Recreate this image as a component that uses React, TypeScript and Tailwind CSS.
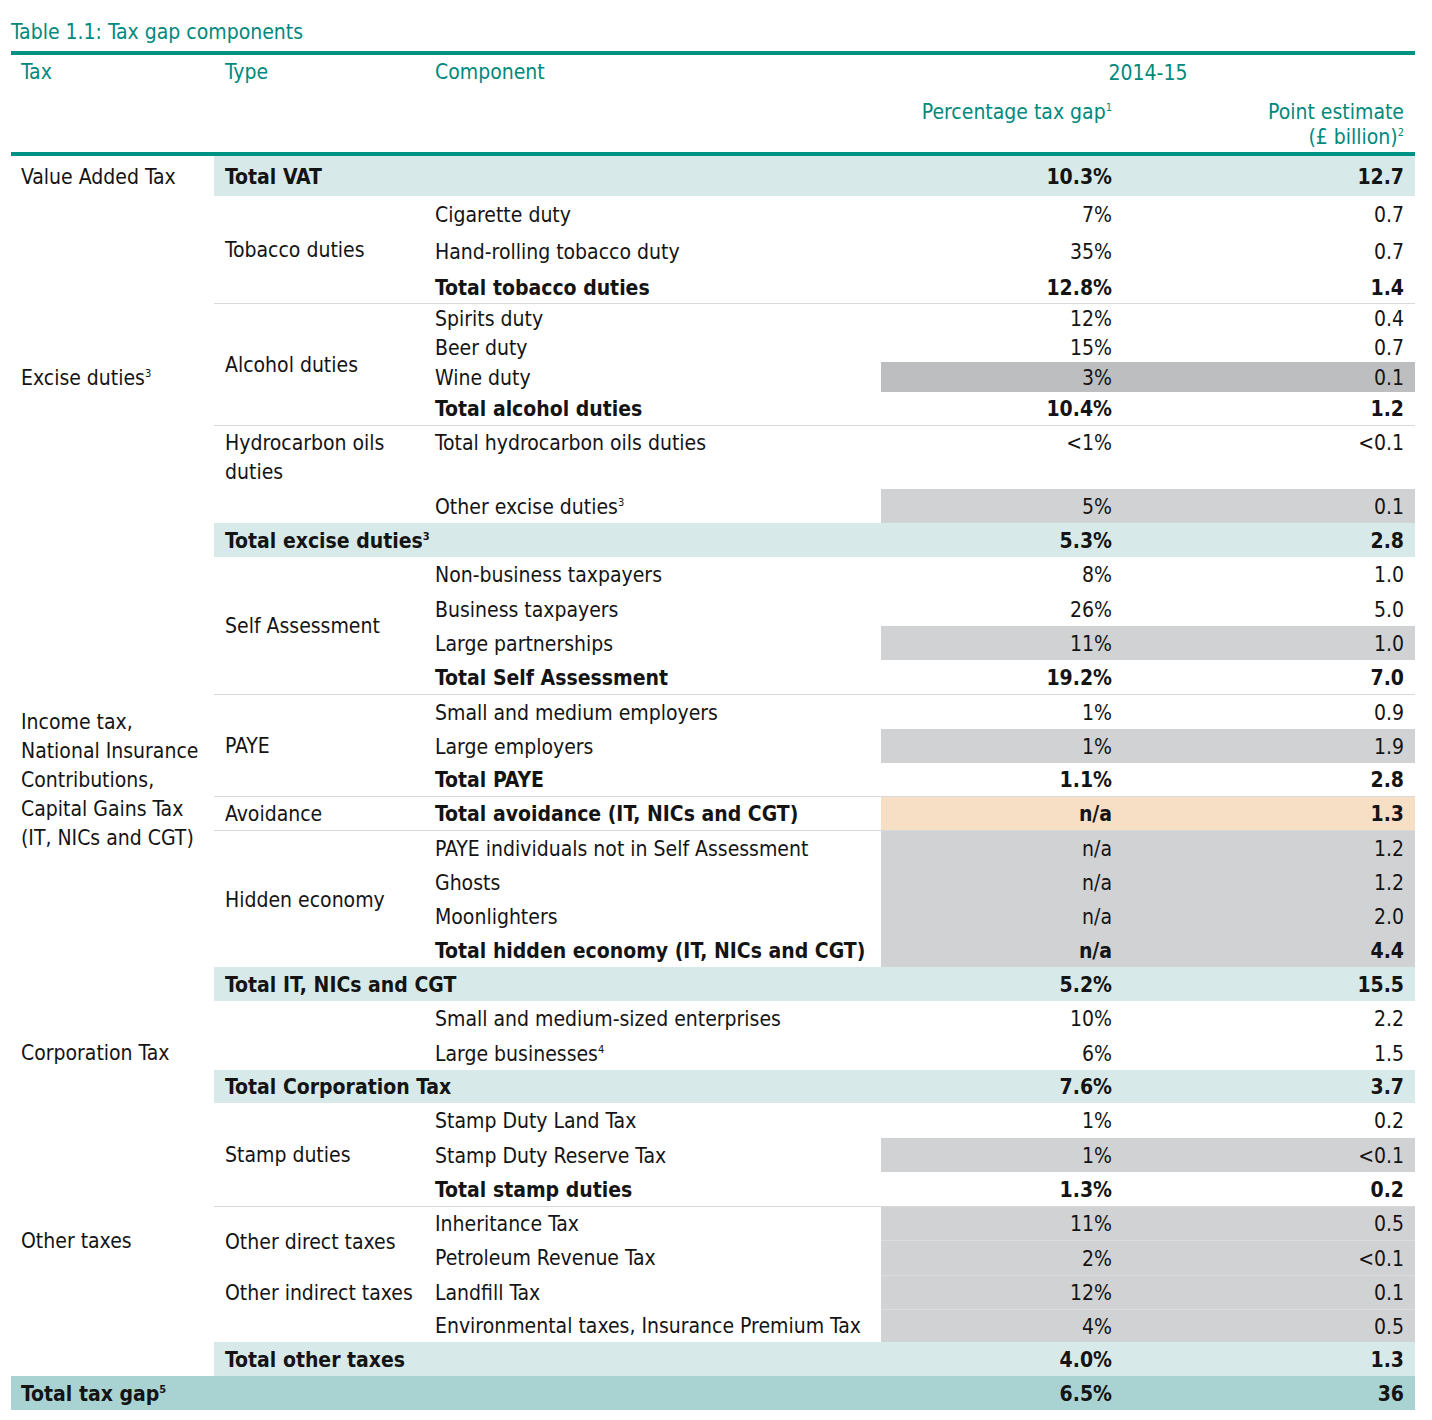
import type { ReactNode } from "react";

function Sup({ children }: { children: ReactNode }) {
  return <sup className="-top-[8px] text-[11px]">{children}</sup>;
}

type Fill = "grey" | "dark" | "peach" | "total" | "grand";

interface Row {
  h: string;
  tax?: [ReactNode, number];
  type?: [ReactNode, number];
  comp?: ReactNode;
  label?: ReactNode;
  band?: "total" | "grand";
  pct: string;
  val: string;
  bold?: boolean;
  fill?: Fill;
  rule?: boolean;
  faint?: boolean;
  top?: boolean;
}

const fills: Record<Fill, string> = {
  grey: "bg-[#d1d2d4]",
  dark: "bg-[#bdbec0]",
  peach: "bg-[#f7dfc6]",
  total: "bg-[#d7e9e9]",
  grand: "bg-[#a9d3d2]",
};

const rows: Row[] = [
  { h: "h-[40px]", tax: ["Value Added Tax", 1], band: "total", label: "Total VAT", pct: "10.3%", val: "12.7" },
  { h: "h-[36px]", tax: [<>Excise duties<Sup>3</Sup></>, 10], type: ["Tobacco duties", 3], comp: "Cigarette duty", pct: "7%", val: "0.7" },
  { h: "h-[39px]", comp: "Hand-rolling tobacco duty", pct: "35%", val: "0.7" },
  { h: "h-[32px]", comp: "Total tobacco duties", pct: "12.8%", val: "1.4", bold: true },
  { h: "h-[30px]", type: ["Alcohol duties", 4], comp: "Spirits duty", pct: "12%", val: "0.4", rule: true },
  { h: "h-[29px]", comp: "Beer duty", pct: "15%", val: "0.7" },
  { h: "h-[30px]", comp: "Wine duty", pct: "3%", val: "0.1", fill: "dark" },
  { h: "h-[33px]", comp: "Total alcohol duties", pct: "10.4%", val: "1.2", bold: true },
  { h: "h-[64px]", type: [<>Hydrocarbon oils<br />duties</>, 1], comp: "Total hydrocarbon oils duties", pct: "<1%", val: "<0.1", rule: true, top: true },
  { h: "h-[34px]", type: ["", 1], comp: <>Other excise duties<Sup>3</Sup></>, pct: "5%", val: "0.1", fill: "grey" },
  { h: "h-[34px]", band: "total", label: <>Total excise duties<Sup>3</Sup></>, pct: "5.3%", val: "2.8" },
  {
    h: "h-[35px]",
    tax: [<>Income tax,<br />National Insurance<br />Contributions,<br />Capital Gains Tax<br />(IT, NICs and CGT)</>, 13],
    type: ["Self Assessment", 4],
    comp: "Non-business taxpayers",
    pct: "8%",
    val: "1.0",
  },
  { h: "h-[34px]", comp: "Business taxpayers", pct: "26%", val: "5.0" },
  { h: "h-[34px]", comp: "Large partnerships", pct: "11%", val: "1.0", fill: "grey" },
  { h: "h-[34px]", comp: "Total Self Assessment", pct: "19.2%", val: "7.0", bold: true },
  { h: "h-[35px]", type: ["PAYE", 3], comp: "Small and medium employers", pct: "1%", val: "0.9", rule: true },
  { h: "h-[34px]", comp: "Large employers", pct: "1%", val: "1.9", fill: "grey" },
  { h: "h-[33px]", comp: "Total PAYE", pct: "1.1%", val: "2.8", bold: true },
  { h: "h-[34px]", type: ["Avoidance", 1], comp: "Total avoidance (IT, NICs and CGT)", pct: "n/a", val: "1.3", bold: true, fill: "peach", rule: true },
  { h: "h-[35px]", type: ["Hidden economy", 4], comp: "PAYE individuals not in Self Assessment", pct: "n/a", val: "1.2", fill: "grey", rule: true },
  { h: "h-[34px]", comp: "Ghosts", pct: "n/a", val: "1.2", fill: "grey" },
  { h: "h-[34px]", comp: "Moonlighters", pct: "n/a", val: "2.0", fill: "grey" },
  { h: "h-[34px]", comp: "Total hidden economy (IT, NICs and CGT)", pct: "n/a", val: "4.4", bold: true, fill: "grey" },
  { h: "h-[34px]", band: "total", label: "Total IT, NICs and CGT", pct: "5.2%", val: "15.5" },
  { h: "h-[35px]", tax: ["Corporation Tax", 3], type: ["", 2], comp: "Small and medium-sized enterprises", pct: "10%", val: "2.2" },
  { h: "h-[34px]", comp: <>Large businesses<Sup>4</Sup></>, pct: "6%", val: "1.5" },
  { h: "h-[33px]", band: "total", label: "Total Corporation Tax", pct: "7.6%", val: "3.7" },
  { h: "h-[35px]", tax: ["Other taxes", 8], type: ["Stamp duties", 3], comp: "Stamp Duty Land Tax", pct: "1%", val: "0.2" },
  { h: "h-[34px]", comp: "Stamp Duty Reserve Tax", pct: "1%", val: "<0.1", fill: "grey" },
  { h: "h-[34px]", comp: "Total stamp duties", pct: "1.3%", val: "0.2", bold: true },
  { h: "h-[34px]", type: ["Other direct taxes", 2], comp: "Inheritance Tax", pct: "11%", val: "0.5", fill: "grey", rule: true },
  { h: "h-[35px]", comp: "Petroleum Revenue Tax", pct: "2%", val: "<0.1", fill: "grey", faint: true },
  { h: "h-[34px]", type: ["Other indirect taxes", 1], comp: "Landfill Tax", pct: "12%", val: "0.1", fill: "grey", faint: true },
  { h: "h-[33px]", type: ["", 1], comp: "Environmental taxes, Insurance Premium Tax", pct: "4%", val: "0.5", fill: "grey", faint: true },
  { h: "h-[34px]", band: "total", label: "Total other taxes", pct: "4.0%", val: "1.3" },
  { h: "h-[34px]", band: "grand", label: <>Total tax gap<Sup>5</Sup></>, pct: "6.5%", val: "36" },
];

function Cols() {
  return (
    <colgroup>
      <col className="w-[203px]" />
      <col className="w-[211px]" />
      <col className="w-[456px]" />
      <col className="w-[241px]" />
      <col className="w-[293px]" />
    </colgroup>
  );
}

function BodyRow({ row }: { row: Row }) {
  const rule = row.rule ? "border-t border-[#d9d9d9]" : "";
  const valign = row.top ? "align-top pt-[3px] leading-[29px]" : "pt-[2px]";
  const fill = row.band ? fills[row.band] : row.fill ? fills[row.fill] : "";
  const numRule = row.faint ? "border-t border-[#dcdde0]" : rule;
  const bold = row.bold || row.band ? "font-bold" : "";

  return (
    <tr className={row.h}>
      {row.tax && (
        <td rowSpan={row.tax[1]} className="pl-[10px] pt-[3px] leading-[29px]">
          {row.tax[0]}
        </td>
      )}
      {row.band === "grand" && (
        <td colSpan={3} className={`pl-[10px] pt-[2px] font-bold ${fill}`}>
          {row.label}
        </td>
      )}
      {row.band === "total" && (
        <td colSpan={2} className={`pl-[11px] pt-[2px] font-bold ${fill} ${rule}`}>
          {row.label}
        </td>
      )}
      {!row.band && row.type && (
        <td rowSpan={row.type[1]} className={`pl-[11px] ${rule} ${valign}`}>
          {row.type[0]}
        </td>
      )}
      {!row.band && (
        <td className={`pl-[10px] ${bold} ${rule} ${valign}`}>{row.comp}</td>
      )}
      <td className={`pr-[10px] text-right ${bold} ${fill} ${numRule} ${valign}`}>
        {row.pct}
      </td>
      <td className={`pr-[11px] text-right ${bold} ${fill} ${numRule} ${valign}`}>
        {row.val}
      </td>
    </tr>
  );
}

export default function App() {
  return (
    <div className="min-h-screen bg-white pl-[11px] font-['Liberation_Sans_Narrow','DejaVu_Sans_Condensed',Roboto,sans-serif] text-[21px] leading-[25px] text-[#141414]">
      {/* Title */}
      <div className="pt-[19px] pb-[6px] leading-[26px] text-[#00897d]">
        Table 1.1: Tax gap components
      </div>

      <div className="h-[4px] w-[1404px] bg-[#009383]" />

      {/* Column headings */}
      <table className="w-[1404px] table-fixed border-separate border-spacing-0 text-[#00897d] leading-[26px]">
        <Cols />
        <tbody>
          <tr className="h-[33px]">
            <td rowSpan={2} className="pl-[10px] pt-[4px] align-top">
              Tax
            </td>
            <td rowSpan={2} className="pl-[11px] pt-[4px] align-top">
              Type
            </td>
            <td rowSpan={2} className="pl-[10px] pt-[4px] align-top">
              Component
            </td>
            <td colSpan={2} className="pt-[2px] text-center">
              2014-15
            </td>
          </tr>
          <tr className="h-[64px]">
            <td className="pr-[10px] pt-[12px] text-right align-top leading-[25px]">
              Percentage tax gap<Sup>1</Sup>
            </td>
            <td className="pr-[11px] pt-[12px] text-right align-top leading-[25px]">
              Point estimate
              <br />
              (£ billion)<Sup>2</Sup>
            </td>
          </tr>
        </tbody>
      </table>

      <div className="h-[4px] w-[1404px] bg-[#009383]" />

      {/* Body */}
      <table className="w-[1404px] table-fixed border-separate border-spacing-0">
        <Cols />
        <tbody>
          {rows.map((row, i) => (
            <BodyRow key={i} row={row} />
          ))}
        </tbody>
      </table>
    </div>
  );
}
